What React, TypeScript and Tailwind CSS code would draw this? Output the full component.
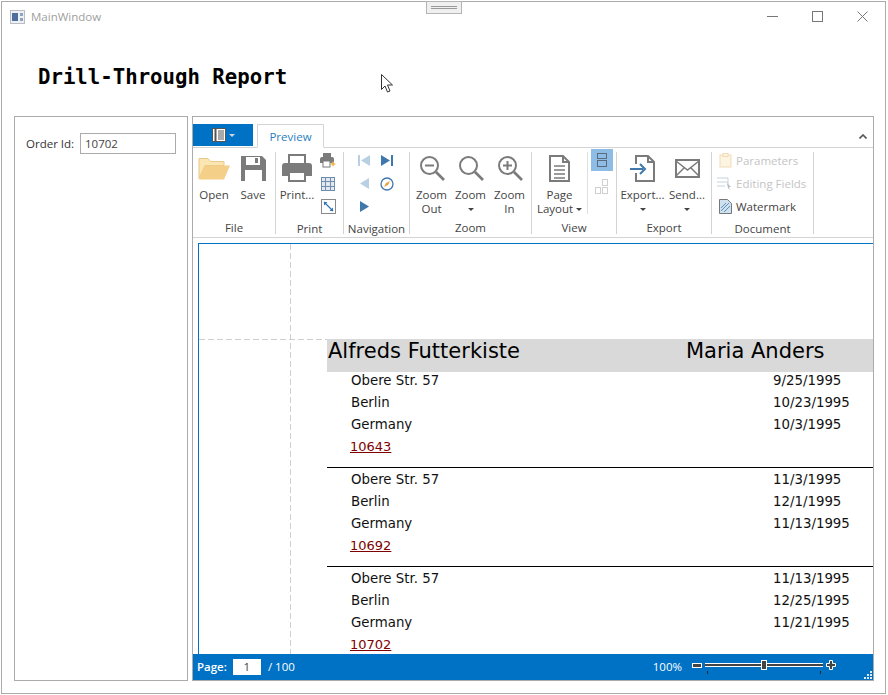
import type { ReactNode } from "react";

const ui = "font-['Open_Sans','Noto_Sans',sans-serif]";

const sections = [
  { lines: ["Obere Str. 57", "Berlin", "Germany"], dates: ["9/25/1995", "10/23/1995", "10/3/1995"], order: "10643" },
  { lines: ["Obere Str. 57", "Berlin", "Germany"], dates: ["11/3/1995", "12/1/1995", "11/13/1995"], order: "10692" },
  { lines: ["Obere Str. 57", "Berlin", "Germany"], dates: ["11/13/1995", "12/25/1995", "11/21/1995"], order: "10702" },
];

function Caret() {
  return <span className="inline-block w-0 h-0 border-x-[3px] border-x-transparent border-t-[3px] border-t-[#444]" />;
}

function BigButton({ w, label, label2, caret, icon }: { w: number; label: string; label2?: string; caret?: boolean; icon: ReactNode }) {
  return (
    <div className="flex flex-col items-center shrink-0" style={{ width: w }}>
      <div className="h-[32px] flex items-center justify-center">{icon}</div>
      <div className="h-[14px] leading-[14px] mt-[4px] whitespace-nowrap">{label}</div>
      <div className="h-[14px] leading-[14px] whitespace-nowrap flex items-center justify-center gap-[3px]">
        {label2}
        {caret && <Caret />}
      </div>
    </div>
  );
}

function Group({ w, label, children }: { w: number; label: string; children: ReactNode }) {
  return (
    <div className="relative shrink-0 flex flex-col h-full pt-[4px]" style={{ width: w }}>
      <div className="h-[66px] flex">{children}</div>
      <div className="h-[20px] leading-[21px] text-center -ml-px">{label}</div>
      <div className="absolute right-0 top-[4px] bottom-[3px] w-px bg-[#d4d4d4]" />
    </div>
  );
}

function Small({ children }: { children: ReactNode }) {
  return <div className="h-[23px] w-[22px] flex items-center justify-center">{children}</div>;
}

function Zoomer({ mark }: { mark: "minus" | "plus" | "none" }) {
  return (
    <svg width="26" height="26" viewBox="0 0 26 26" fill="none" stroke="#7b7b7b" strokeWidth="2">
      <circle cx="10.5" cy="10.5" r="8.5" />
      <path d="M17 17l8 8" strokeWidth="2.6" />
      {mark !== "none" && <path d="M6 10.5h9" />}
      {mark === "plus" && <path d="M10.5 6v9" />}
    </svg>
  );
}

export default function App() {
  return (
    <div className={`relative w-[888px] h-[695px] bg-white overflow-hidden text-[11.5px] text-[#444] ${ui}`}>
      <div className="ml-px mt-px w-[885px] h-[693px] border border-[#ababab] flex flex-col">
        {/* title bar */}
        <div className="h-[29px] shrink-0 flex items-center pl-[8px] pr-[17px]">
          <svg width="15" height="14" viewBox="0 0 15 14">
            <rect x="0.5" y="0.5" width="14" height="13" fill="#eef0f3" stroke="#b9bec6" />
            <rect x="2" y="3" width="6" height="8" fill="#4d6f9e" />
            <rect x="10" y="3" width="3" height="3" fill="#8ea3bf" />
            <rect x="10" y="8" width="3" height="3" fill="#8ea3bf" />
          </svg>
          <span className="ml-[6px] text-[#a0a0a0] leading-none">MainWindow</span>
          <div className="ml-auto flex items-center gap-[34px]">
            <svg width="11" height="11" viewBox="0 0 11 11" stroke="#777"><path d="M0 5.5h11" /></svg>
            <svg width="11" height="11" viewBox="0 0 11 11" fill="none" stroke="#777"><rect x="0.5" y="0.5" width="10" height="10" /></svg>
            <svg width="11" height="11" viewBox="0 0 11 11" stroke="#777"><path d="M0.5 0.5l10 10M10.5 0.5l-10 10" /></svg>
          </div>
        </div>

        {/* heading */}
        <div className="h-[85px] shrink-0 pl-[36px] pt-[33px]">
          <h1 className="font-['DejaVu_Sans_Mono',monospace] font-bold text-[20.7px] leading-[26px] text-black">Drill-Through Report</h1>
        </div>

        <div className="flex gap-[4px] pl-[12px]">
          {/* parameters */}
          <div className="w-[174px] h-[565px] border border-[#ababab] pl-[11px] pt-[16px]">
            <div className="flex items-center">
              <span className="w-[54px] text-[#333]">Order Id:</span>
              <div className="w-[96px] h-[21px] border border-[#ababab] pl-[4px] leading-[20px] text-[#444]">10702</div>
            </div>
          </div>

          {/* viewer */}
          <div className="w-[682px] h-[565px] border border-[#ababab] flex flex-col">
            <div className="h-[30px] shrink-0 pt-[7px] flex relative">
              <div className="w-[60px] h-[22px] bg-[#0072c6] flex items-center justify-center gap-[3px]">
                <svg width="14" height="14" viewBox="0 0 14 14" fill="none" stroke="#555">
                  <rect x="0.5" y="0.5" width="13" height="13" fill="#fff" />
                  <path d="M3.5 0.5v13" strokeWidth="2" />
                  <path d="M6 3h6M6 5h6M6 7h6M6 9h6M6 11h6" />
                </svg>
                <span className="inline-block w-0 h-0 border-x-[3px] border-x-transparent border-t-[3px] border-t-[#cfd8e0]" />
              </div>
              <div className="ml-[4px] w-[67px] h-[24px] border border-[#d4d4d4] border-b-white bg-white z-10 text-center leading-[24px] text-[#2a7fc0]">Preview</div>
              <svg className="absolute right-[6px] top-[17px]" width="8" height="5" viewBox="0 0 8 5" fill="none" stroke="#555" strokeWidth="1.6"><path d="M0.5 4.5L4 1l3.500 3.500" /></svg>
            </div>

            {/* ribbon */}
            <div className="h-[91px] shrink-0 border-y border-[#d4d4d4] flex">
              <Group w={83} label="File">
                <div className="flex pl-[3px]">
                  <BigButton w={36} label="Open" icon={
                    <svg width="32" height="25" viewBox="0 0 32 24">
                      <path d="M1 22V2h9l3 3h13v4H7L1 22z" fill="#fbe5b0" stroke="#e9c987" />
                      <path d="M7 9h25l-6 14H1z" fill="#f3cf87" />
                    </svg>
                  } />
                  <BigButton w={42} label="Save" icon={
                    <svg width="25" height="25" viewBox="0 0 25 25">
                      <path d="M0 0h21l4 4v21H0z" fill="#7b7b7b" />
                      <rect x="5" y="1" width="14" height="8" fill="#fff" />
                      <rect x="14" y="2" width="3" height="5" fill="#7b7b7b" />
                      <rect x="4" y="14" width="17" height="11" fill="#fff" />
                    </svg>
                  } />
                </div>
              </Group>
              <Group w={68} label="Print">
                <BigButton w={42} label="Print..." icon={
                  <svg width="30" height="28" viewBox="0 0 30 28">
                    <path d="M7 9V1h16v8" fill="none" stroke="#7b7b7b" strokeWidth="2" />
                    <path d="M3 9h24a3 3 0 013 3v10h-6v-5H6v5H0V12a3 3 0 013-3z" fill="#7b7b7b" />
                    <rect x="7" y="18" width="16" height="9" fill="#fff" stroke="#7b7b7b" strokeWidth="2" />
                  </svg>
                } />
                <div className="flex flex-col -ml-[1px] -mt-[3px]">
                  <Small>
                    <svg width="16" height="15" viewBox="0 0 16 15">
                      <path d="M3 4V0h8v4M2 4h10a2 2 0 012 2v4H0V6a2 2 0 012-2z" fill="#7b7b7b" />
                      <rect x="3" y="8" width="7" height="6" fill="#fff" stroke="#7b7b7b" />
                      <path d="M13 8l1 2 2 1-2 1-1 2-1-2-2-1 2-1z" fill="#f0b94f" />
                    </svg>
                  </Small>
                  <Small>
                    <svg width="14" height="14" viewBox="0 0 14 14" fill="#e4e9ef" stroke="#6f8db0">
                      <rect x="0.5" y="0.5" width="13" height="13" />
                      <path d="M4.5 0.5v13M9.5 0.5v13M0.5 4.5h13M0.5 9.5h13" fill="none" />
                    </svg>
                  </Small>
                  <Small>
                    <svg width="15" height="15" viewBox="0 0 15 15" fill="none">
                      <rect x="0.5" y="0.5" width="14" height="14" stroke="#8a8a8a" />
                      <path d="M3 3l9 9" stroke="#2f74b5" strokeWidth="1.3" />
                      <path d="M3 3h3.5L3 6.5zM12 12H8.5L12 8.5z" fill="#2f74b5" />
                    </svg>
                  </Small>
                </div>
              </Group>
              <Group w={66} label="Navigation">
                <div className="grid grid-cols-[23px_23px] pl-[9px] h-[69px] -mt-[3px]">
                  <Small>
                    <svg width="12" height="11" viewBox="0 0 12 11" fill="#b9d0e4"><rect width="2" height="11" /><path d="M12 0v11L3 5.5z" /></svg>
                  </Small>
                  <Small>
                    <svg width="12" height="11" viewBox="0 0 12 11" fill="#3f78ac"><rect x="10" width="2" height="11" /><path d="M0 0v11l9-5.5z" /></svg>
                  </Small>
                  <Small>
                    <svg width="9" height="11" viewBox="0 0 9 11" fill="#b9d0e4"><path d="M9 0v11L0 5.5z" /></svg>
                  </Small>
                  <Small>
                    <svg width="14" height="14" viewBox="0 0 14 14" fill="none">
                      <circle cx="7" cy="7" r="6" stroke="#3f78ac" strokeWidth="1.3" />
                      <path d="M10 4L8 8 4 10l2-4z" fill="#e8a33d" />
                    </svg>
                  </Small>
                  <Small>
                    <svg width="9" height="11" viewBox="0 0 9 11" fill="#3f78ac"><path d="M0 0v11l9-5.5z" /></svg>
                  </Small>
                </div>
              </Group>
              <Group w={122} label="Zoom">
                <div className="flex pl-[2px]">
                  <BigButton w={39} label="Zoom" label2="Out" icon={<Zoomer mark="minus" />} />
                  <BigButton w={39} label="Zoom" caret icon={<Zoomer mark="none" />} />
                  <BigButton w={39} label="Zoom" label2="In" icon={<Zoomer mark="plus" />} />
                </div>
              </Group>
              <Group w={85} label="View">
                <div className="flex relative">
                  <BigButton w={55} label="Page" label2="Layout" caret icon={
                    <svg width="21" height="27" viewBox="0 0 21 27" fill="none" stroke="#7b7b7b" strokeWidth="2">
                      <path d="M1 1h13l6 6v19H1z" />
                      <path d="M14 1v6h6" />
                      <path d="M5 11h11M5 15h11M5 19h11M5 23h11" strokeWidth="1.5" />
                    </svg>
                  } />
                  <div className="w-px h-[62px] bg-[#e0e0e0]" />
                  <div className="ml-[3px] -mt-[3px] flex flex-col">
                    <div className="w-[22px] h-[22px] bg-[#8dbde6] flex items-center justify-center">
                      <svg width="12" height="14" viewBox="0 0 12 14" fill="none" stroke="#5c6b78">
                        <rect x="1.5" y="0.5" width="9" height="5" />
                        <rect x="1.5" y="7.5" width="9" height="6" />
                      </svg>
                    </div>
                    <div className="w-[22px] h-[22px] mt-[4px] flex items-center justify-center">
                      <svg width="14" height="15" viewBox="0 0 14 15" fill="none" stroke="#cfcfcf">
                        <rect x="7.5" y="0.5" width="5" height="6" />
                        <rect x="0.5" y="8.5" width="5" height="6" />
                        <rect x="7.5" y="8.5" width="5" height="6" />
                      </svg>
                    </div>
                  </div>
                </div>
              </Group>
              <Group w={95} label="Export">
                <div className="flex pl-[4px]">
                  <BigButton w={43} label="Export..." caret icon={
                    <svg width="26" height="27" viewBox="0 0 26 27" fill="none">
                      <path d="M6 9V1h12l6 6v19H6v-8" stroke="#7b7b7b" strokeWidth="2" />
                      <path d="M18 1v6h6" stroke="#7b7b7b" strokeWidth="2" />
                      <path d="M0 14h13" stroke="#3f78ac" strokeWidth="2" />
                      <path d="M10 9l5 5-5 5" stroke="#3f78ac" strokeWidth="2" />
                    </svg>
                  } />
                  <BigButton w={46} label="Send..." caret icon={
                    <svg width="25" height="19" viewBox="0 0 25 19" fill="none" stroke="#7b7b7b" strokeWidth="2">
                      <rect x="1" y="1" width="23" height="17" />
                      <path d="M1 2l11.500 9L24 2M1 17l8-8M24 17l-8-8" strokeWidth="1.5" />
                    </svg>
                  } />
                </div>
              </Group>
              <Group w={102} label="Document">
                <div className="flex flex-col pl-[7px] -mt-[3px] text-[#444]">
                  <div className="h-[23px] flex items-center gap-[4px] text-[#c4c4c4]">
                    <svg width="13" height="15" viewBox="0 0 13 15" fill="#fdf5e2" stroke="#efdcb5"><rect x="1" y="2" width="11" height="12" /><rect x="4" y="0.500" width="5" height="3" /></svg>
                    Parameters
                  </div>
                  <div className="h-[23px] flex items-center gap-[4px] -ml-[2px] text-[#c4c4c4]">
                    <svg width="15" height="13" viewBox="0 0 15 13" fill="none" stroke="#c5d2de"><path d="M0 1h11M0 5h11M0 9h8M11 1v8" /><path d="M10 6l4 4-2 0 1 3-2-2z" fill="#bbb" stroke="none" /></svg>
                    Editing Fields
                  </div>
                  <div className="h-[23px] flex items-center gap-[4px]">
                    <svg width="13" height="15" viewBox="0 0 13 15" fill="#cfe0ef" stroke="#777"><path d="M0.500 0.500h8l4 4v10h-12z" /><path d="M2 12l8-8M2 9l5-5M5 13l6-6" stroke="#5d8fbd" fill="none" /></svg>
                    Watermark
                  </div>
                </div>
              </Group>
            </div>

            {/* report page */}
            <div className="h-[416px] shrink-0 pl-[5px] pt-[5px] overflow-hidden">
              <div className="relative h-full border-l border-t border-[#0072c6] pt-[95px] pl-[128px] overflow-hidden font-['DejaVu_Sans',sans-serif] text-[13.33px] text-[#111]">
                <div className="absolute left-[91px] top-0 bottom-0 w-px bg-[repeating-linear-gradient(to_bottom,#cfcfcf_0,#cfcfcf_6px,transparent_6px,transparent_9px)]" />
                <div className="absolute left-0 top-[95px] w-[128px] h-px bg-[repeating-linear-gradient(to_right,#cfcfcf_0,#cfcfcf_6px,transparent_6px,transparent_9px)]" />
                <div className="h-[33px] bg-[#d9d9d9] flex items-start pl-px text-[21px] leading-[24px] text-black">
                  <span className="w-[358px]">Alfreds Futterkiste</span>
                  <span>Maria Anders</span>
                </div>
                {sections.map((s, i) => (
                  <div key={s.order} className={i === 0 ? "-mt-[2px] h-[97px]" : "border-t border-black h-[99px] pt-px"}>
                    {s.lines.map((line, j) => (
                      <div key={line} className="h-[22px] leading-[22px] flex pl-[24px]">
                        <span className="w-[422px]">{line}</span>
                        <span>{s.dates[j]}</span>
                      </div>
                    ))}
                    <div className="h-[22px] leading-[22px] pl-[23px] text-[13px]">
                      <span className="underline text-[#800000]">{s.order}</span>
                    </div>
                  </div>
                ))}
              </div>
            </div>

            {/* status bar */}
            <div className="relative h-[26px] shrink-0 bg-[#0072c6] flex items-center pl-[4px] text-white">
              <span className="font-semibold">Page:</span>
              <div className="ml-[6px] w-[28px] h-[16px] bg-white text-[#444] text-center leading-[16px]">1</div>
              <span className="ml-[7px]">/ 100</span>
              <span className="ml-auto mr-[10px]">100%</span>
              <div className="relative mr-[37px] -mt-[4px] flex items-center">
                <div className="w-[10px] h-[5px] bg-[#444] border border-white" />
                <div className="relative ml-[3px] w-[118px] h-[4px] bg-[#444] border-y border-white">
                  <div className="absolute left-[56px] -top-[4px] w-[6px] h-[10px] bg-[#444] border border-white" />
                  <div className="absolute left-[2px] top-[7px] w-px h-[3px] bg-[#222]" />
                  <div className="absolute right-[2px] top-[7px] w-px h-[3px] bg-[#222]" />
                </div>
                <svg className="ml-[3px]" width="10" height="10" viewBox="0 0 10 10">
                  <path d="M3.500 0.500h3v3h3v3h-3v3h-3v-3h-3v-3h3z" fill="#444" stroke="#fff" />
                </svg>
              </div>
              <svg className="absolute right-px bottom-px" width="8" height="8" viewBox="0 0 8 8" fill="#dfe9f3">
                <rect x="6" y="0" width="2" height="2" /><rect x="3" y="3" width="2" height="2" /><rect x="6" y="3" width="2" height="2" />
                <rect x="0" y="6" width="2" height="2" /><rect x="3" y="6" width="2" height="2" /><rect x="6" y="6" width="2" height="2" />
              </svg>
            </div>
          </div>
        </div>
      </div>

      {/* window resize handle + mouse cursor sit over the window */}
      <div className="absolute left-[426px] top-px w-[36px] h-[13px] bg-[#f0f0f0] border border-[#b5b5b5] flex flex-col items-center justify-center gap-[1px]">
        <div className="w-[26px] h-px bg-[#9a9a9a]" />
        <div className="w-[26px] h-px bg-[#9a9a9a]" />
      </div>
      <svg className="absolute left-[381px] top-[74px]" width="13" height="20" viewBox="0 0 13 20" fill="#fff" stroke="#333">
        <path d="M0.500 0.500v15l3.500-3.500 2.500 6 2.500-1-2.500-6h5z" />
      </svg>
    </div>
  );
}
